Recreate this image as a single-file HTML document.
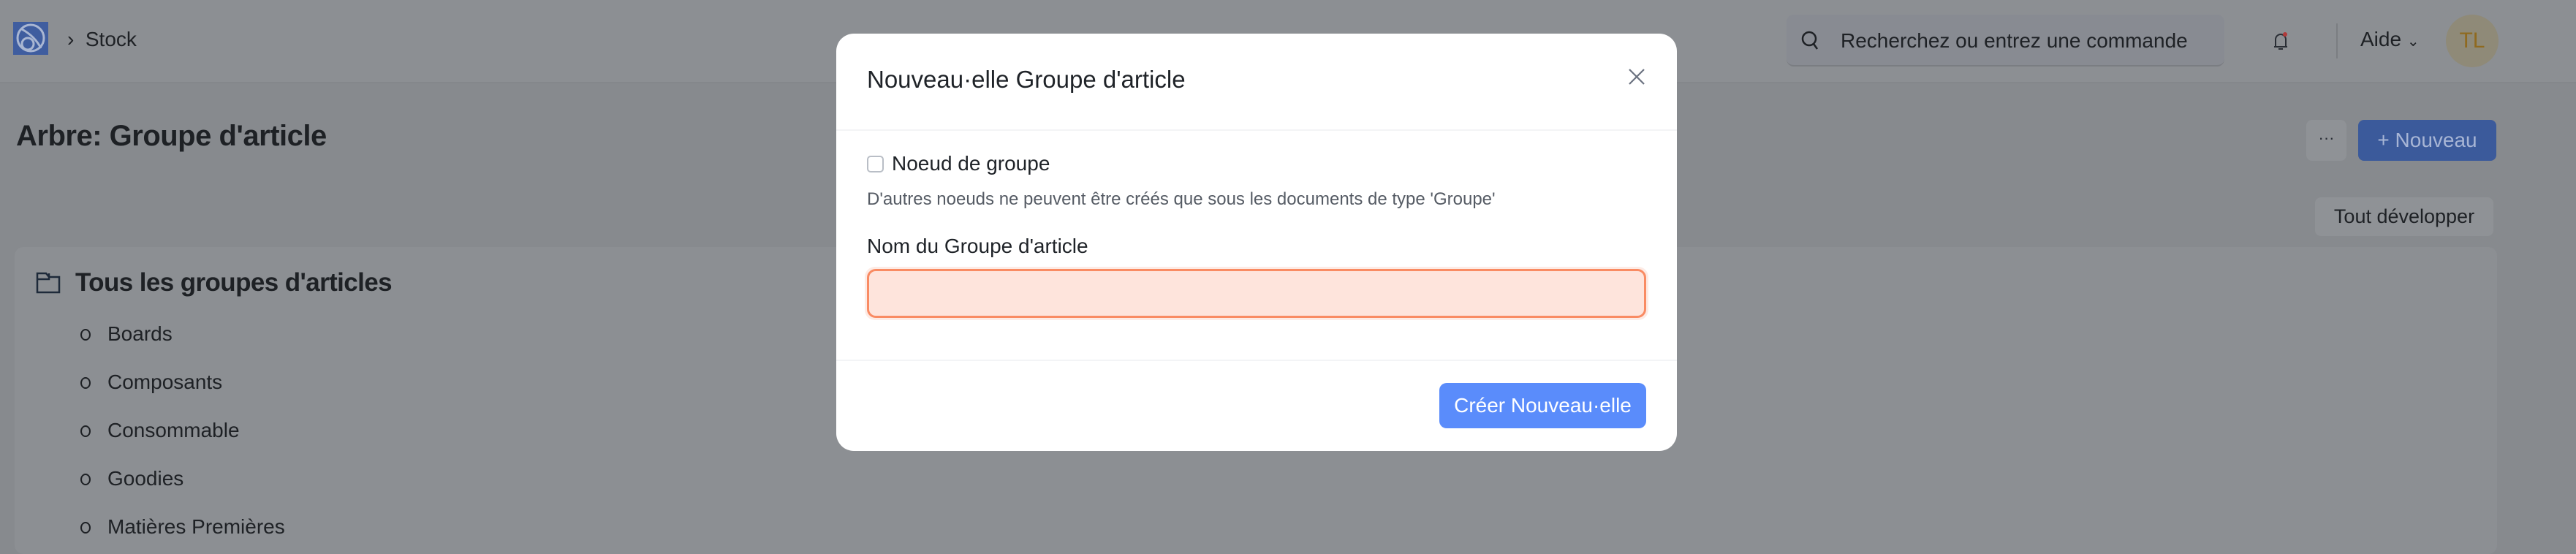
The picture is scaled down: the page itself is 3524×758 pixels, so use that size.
<!DOCTYPE html>
<html><head><meta charset="utf-8"><style>
*{box-sizing:border-box;margin:0;padding:0}
body{width:3524px;height:732px;overflow:hidden;background:#878a8e;font-family:"Liberation Sans",sans-serif;position:relative;color:#1e2125}
.a{position:absolute;white-space:nowrap}
</style></head><body>
<div class="a" style="left:0;top:0;width:3524px;height:114px;background:#8c8f93;border-bottom:2px solid #84878b"></div>
<svg class="a" style="left:18px;top:30px" width="48" height="45" viewBox="0 0 48 45"><rect width="48" height="45" fill="#3f5d9f"/><circle cx="24" cy="22" r="18" fill="none" stroke="#a9b6d2" stroke-width="3"/><circle cx="20" cy="30" r="8" fill="none" stroke="#a9b6d2" stroke-width="3"/><path d="M12 10 Q30 20 38 36" fill="none" stroke="#a9b6d2" stroke-width="3"/></svg>
<div class="a" style="left:92px;top:38px;font-size:28px;color:#1e2125">›&nbsp; Stock</div>
<div class="a" style="left:2444px;top:20px;width:599px;height:71px;background:#888b92;border-radius:10px;border-bottom:2px solid #7a7d82"></div>
<svg class="a" style="left:2462px;top:40px" width="28" height="30" viewBox="0 0 28 30"><circle cx="13" cy="13" r="9" fill="none" stroke="#1e2125" stroke-width="2.5"/><path d="M19 20l5 7" stroke="#1e2125" stroke-width="2.5"/></svg>
<div class="a" style="left:2518px;top:40px;font-size:28px;color:#1e2125">Recherchez ou entrez une commande</div>
<svg class="a" style="left:3106px;top:40px" width="28" height="32" viewBox="0 0 28 32"><path d="M7 24 V14 a7 7 0 0 1 14 0 V24 H5 H23" fill="none" stroke="#2a2e35" stroke-width="2"/><path d="M11 27h6" stroke="#2a2e35" stroke-width="2"/><circle cx="20" cy="7" r="3" fill="#b03a3a"/></svg>
<div class="a" style="left:3196px;top:32px;width:2px;height:48px;background:#7b7e82"></div>
<div class="a" style="left:3229px;top:38px;font-size:28px;color:#1e2125">Aide <span style="font-size:20px">⌄</span></div>
<div class="a" style="left:3346px;top:20px;width:72px;height:72px;border-radius:50%;background:#8f8a78;color:#8f6a20;font-size:30px;line-height:72px;text-align:center">TL</div>
<div class="a" style="left:22px;top:164px;font-size:40px;font-weight:bold;color:#1e2125;letter-spacing:-0.5px">Arbre: Groupe d'article</div>
<div class="a" style="left:3155px;top:164px;width:55px;height:56px;border-radius:8px;background:#8f9296;text-align:center;line-height:50px;font-size:22px;color:#2a2e35">···</div>
<div class="a" style="left:3226px;top:164px;width:189px;height:56px;border-radius:8px;background:#3b5a9b;color:#a7b5d5;font-size:28px;line-height:56px;text-align:center">+ Nouveau</div>
<div class="a" style="left:3167px;top:270px;width:244px;height:53px;border-radius:8px;background:#8f9296;color:#1e2125;font-size:27px;line-height:53px;text-align:center">Tout développer</div>
<div class="a" style="left:20px;top:338px;width:3396px;height:420px;border-radius:12px;background:#8c8f93"></div>
<svg class="a" style="left:49px;top:372px" width="34" height="30" viewBox="0 0 34 30"><path d="M2 2h12l4 5h14v21H2z M2 10h16V2" fill="none" stroke="#1e2a3a" stroke-width="2.5"/></svg>
<div class="a" style="left:103px;top:367px;font-size:35px;font-weight:bold;color:#1e2125;letter-spacing:-0.6px">Tous les groupes d'articles</div>
<div class="a" style="left:110px;top:424px;font-size:28px;line-height:66px;color:#1e2125">
<div><span style="display:inline-block;width:14px;height:16px;border:2px solid #1e2125;border-radius:50%;margin-right:23px"></span>Boards</div>
<div><span style="display:inline-block;width:14px;height:16px;border:2px solid #1e2125;border-radius:50%;margin-right:23px"></span>Composants</div>
<div><span style="display:inline-block;width:14px;height:16px;border:2px solid #1e2125;border-radius:50%;margin-right:23px"></span>Consommable</div>
<div><span style="display:inline-block;width:14px;height:16px;border:2px solid #1e2125;border-radius:50%;margin-right:23px"></span>Goodies</div>
<div><span style="display:inline-block;width:14px;height:16px;border:2px solid #1e2125;border-radius:50%;margin-right:23px"></span>Matières Premières</div>
</div>
<div class="a" style="left:1144px;top:46px;width:1150px;height:571px;background:#fff;border-radius:24px"></div>
<div class="a" style="left:1186px;top:90px;font-size:33px;color:#1f2328">Nouveau·elle Groupe d'article</div>
<svg class="a" style="left:2226px;top:92px" width="26" height="26" viewBox="0 0 26 26"><path d="M3 3l20 20M23 3L3 23" stroke="#6b7280" stroke-width="2.2"/></svg>
<div class="a" style="left:1144px;top:177px;width:1150px;height:2px;background:#f3f4f6"></div>
<div class="a" style="left:1186px;top:213px;width:23px;height:23px;border:2px solid #b9bec6;border-radius:5px"></div>
<div class="a" style="left:1220px;top:208px;font-size:28px;color:#1f2328">Noeud de groupe</div>
<div class="a" style="left:1186px;top:259px;font-size:24px;color:#555b64">D'autres noeuds ne peuvent être créés que sous les documents de type 'Groupe'</div>
<div class="a" style="left:1186px;top:321px;font-size:28px;color:#1f2328">Nom du Groupe d'article</div>
<div class="a" style="left:1183px;top:365px;width:1072px;height:73px;border-radius:14px;background:#fdebe5"></div>
<div class="a" style="left:1186px;top:368px;width:1066px;height:67px;border-radius:12px;background:#fee4dc;border:3px solid #f98b63"></div>
<div class="a" style="left:1144px;top:492px;width:1150px;height:2px;background:#f3f4f6"></div>
<div class="a" style="left:1969px;top:524px;width:283px;height:62px;border-radius:10px;background:#5a8cfb;color:#fff;font-size:28px;line-height:62px;text-align:center">Créer Nouveau·elle</div>
</body></html>
